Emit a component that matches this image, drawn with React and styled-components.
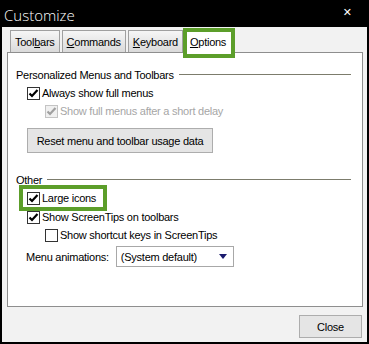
import styled, { createGlobalStyle } from "styled-components";

const GlobalStyle = createGlobalStyle`
  html, body { margin: 0; padding: 0; background: #000; }
  body { font-family: "Liberation Sans", Arial, sans-serif; }
`;

const Window = styled.div`
  width: 369px;
  height: 344px;
  box-sizing: border-box;
  background: #000;
  padding: 0 2px 2px 2px;
  display: flex;
  flex-direction: column;
`;

const TitleBar = styled.div`
  height: 27px;
  flex-shrink: 0;
  display: flex;
  align-items: center;
  justify-content: space-between;
  color: #fff;
  font-family: "Open Sans", sans-serif;
  font-weight: 300;
  font-size: 15px;
  padding: 2px 15px 0 2px;
  box-sizing: border-box;
`;

const CloseX = styled.span`
  font-family: "DejaVu Sans", sans-serif;
  font-size: 11px;
  font-weight: bold;
  margin-top: -4px;
`;

const Body = styled.div`
  flex: 1;
  background: #f2f2f2;
  display: flex;
  flex-direction: column;
  padding: 3px 4px 0 5px;
  font-size: 11px;
  letter-spacing: -0.25px;
  white-space: nowrap;
`;

const TabRow = styled.div`
  display: flex;
  align-items: flex-end;
  padding-left: 3px;
  height: 22px;
  flex-shrink: 0;
  position: relative;
  z-index: 1;
`;

const Tab = styled.div`
  height: 22px;
  box-sizing: border-box;
  padding: 0 4px;
  margin-right: 2px;
  border: 1px solid #a0a0a0;
  border-bottom: none;
  background: linear-gradient(#f6f6f6, #dadada);
  line-height: 22px;
  color: #000;
  u { text-decoration: underline; }
`;

const ActiveTab = styled.div`
  height: 30px;
  margin-top: -2px;
  margin-bottom: -6px;
  margin-left: -2px;
  box-sizing: border-box;
  padding: 0 5px 0 3px;
  border: 4px solid #5c9e2a;
  background: #fff;
  line-height: 20px;
  color: #000;
`;

const Panel = styled.div`
  height: 255px;
  flex-shrink: 0;
  box-sizing: border-box;
  background: #fff;
  border: 1px solid #8e8e8e;
  padding: 14px 11px 0 8px;
  color: #000;
  display: flex;
  flex-direction: column;
  align-items: flex-start;
`;

const GroupHead = styled.div`
  display: flex;
  align-items: center;
  align-self: stretch;
  height: 16px;
  gap: 5px;
  &::after {
    content: "";
    flex: 1;
    height: 1px;
    background: #7c7c6c;
    margin-top: -2px;
  }
`;

const Row = styled.label`
  display: flex;
  align-items: center;
  height: 18px;
  margin-left: ${(p) => p.$indent ?? 11}px;
  margin-top: ${(p) => p.$top || 0}px;
  color: ${(p) => (p.$disabled ? "#a6a6a6" : "#000")};
  gap: 2px;
`;

const Box = styled.span`
  width: 13px;
  height: 13px;
  box-sizing: border-box;
  border: 1px solid ${(p) => (p.$disabled ? "#c4c4c4" : "#333")};
  background: ${(p) => (p.$disabled ? "#f0f0f0" : "#fff")};
  display: flex;
  align-items: center;
  justify-content: center;
  flex-shrink: 0;
`;

const Highlight = styled.div`
  width: 88px;
  height: 26px;
  box-sizing: border-box;
  border: 4px solid #5c9e2a;
  margin: -3px 0 0 3px;
  display: flex;
  align-items: center;
  position: relative;
  z-index: 1;
`;

const Button = styled.div`
  width: 186px;
  height: 25px;
  box-sizing: border-box;
  border: 1px solid #adadad;
  background: #e5e5e5;
  display: flex;
  align-items: center;
  justify-content: center;
  margin-left: 11px;
`;

const SelectRow = styled.div`
  display: flex;
  align-items: center;
  margin-left: 10px;
  gap: 7px;
`;

const Select = styled.div`
  width: 118px;
  height: 21px;
  box-sizing: border-box;
  border: 1px solid #a8a8a8;
  display: flex;
  align-items: center;
  justify-content: space-between;
  padding: 0 6px 0 4px;
`;

const Footer = styled.div`
  flex: 1;
  display: flex;
  justify-content: flex-end;
  align-items: flex-start;
  padding-top: 8px;
`;

const CloseButton = styled(Button)`
  width: 63px;
  height: 23px;
  margin: 0 1px 0 0;
`;

const Spacer = styled.div`
  height: ${(p) => p.$h}px;
  flex-shrink: 0;
`;

const Check = ({ disabled }) => (
  <svg width="11" height="11" viewBox="0 0 11 11">
    <path
      d="M1.5 5.5 L4 8 L9.5 2"
      fill="none"
      stroke={disabled ? "#a0a0a0" : "#000"}
      strokeWidth="2.2"
    />
  </svg>
);

const CheckRow = ({ checked, disabled, indent, top, children }) => (
  <Row $indent={indent} $top={top} $disabled={disabled}>
    <Box $disabled={disabled}>{checked && <Check disabled={disabled} />}</Box>
    {children}
  </Row>
);

export default function App() {
  return (
    <>
      <GlobalStyle />
      <Window>
        <TitleBar>
          <span>Customize</span>
          <CloseX>✕</CloseX>
        </TitleBar>
        <Body>
          <TabRow>
            <Tab>
              Tool<u>b</u>ars
            </Tab>
            <Tab>
              <u>C</u>ommands
            </Tab>
            <Tab>
              <u>K</u>eyboard
            </Tab>
            <ActiveTab>
              <u>O</u>ptions
            </ActiveTab>
          </TabRow>
          <Panel>
            <GroupHead>Personalized Menus and Toolbars</GroupHead>
            <Spacer $h={1} />
            <CheckRow checked>Always show full menus</CheckRow>
            <CheckRow checked disabled indent={29}>
              Show full menus after a short delay
            </CheckRow>
            <Spacer $h={8} />
            <Button>Reset menu and toolbar usage data</Button>
            <Spacer $h={19} />
            <GroupHead>Other</GroupHead>
            <Highlight>
              <CheckRow checked indent={4}>
                Large icons
              </CheckRow>
            </Highlight>
            <CheckRow checked top={-3}>
              Show ScreenTips on toolbars
            </CheckRow>
            <CheckRow indent={29}>Show shortcut keys in ScreenTips</CheckRow>
            <Spacer $h={2} />
            <SelectRow>
              <span>Menu animations:</span>
              <Select>
                <span>(System default)</span>
                <svg width="8" height="5" viewBox="0 0 8 5">
                  <path d="M0 0 H8 L4 5 Z" fill="#1a1a6e" />
                </svg>
              </Select>
            </SelectRow>
          </Panel>
          <Footer>
            <CloseButton>Close</CloseButton>
          </Footer>
        </Body>
      </Window>
    </>
  );
}
